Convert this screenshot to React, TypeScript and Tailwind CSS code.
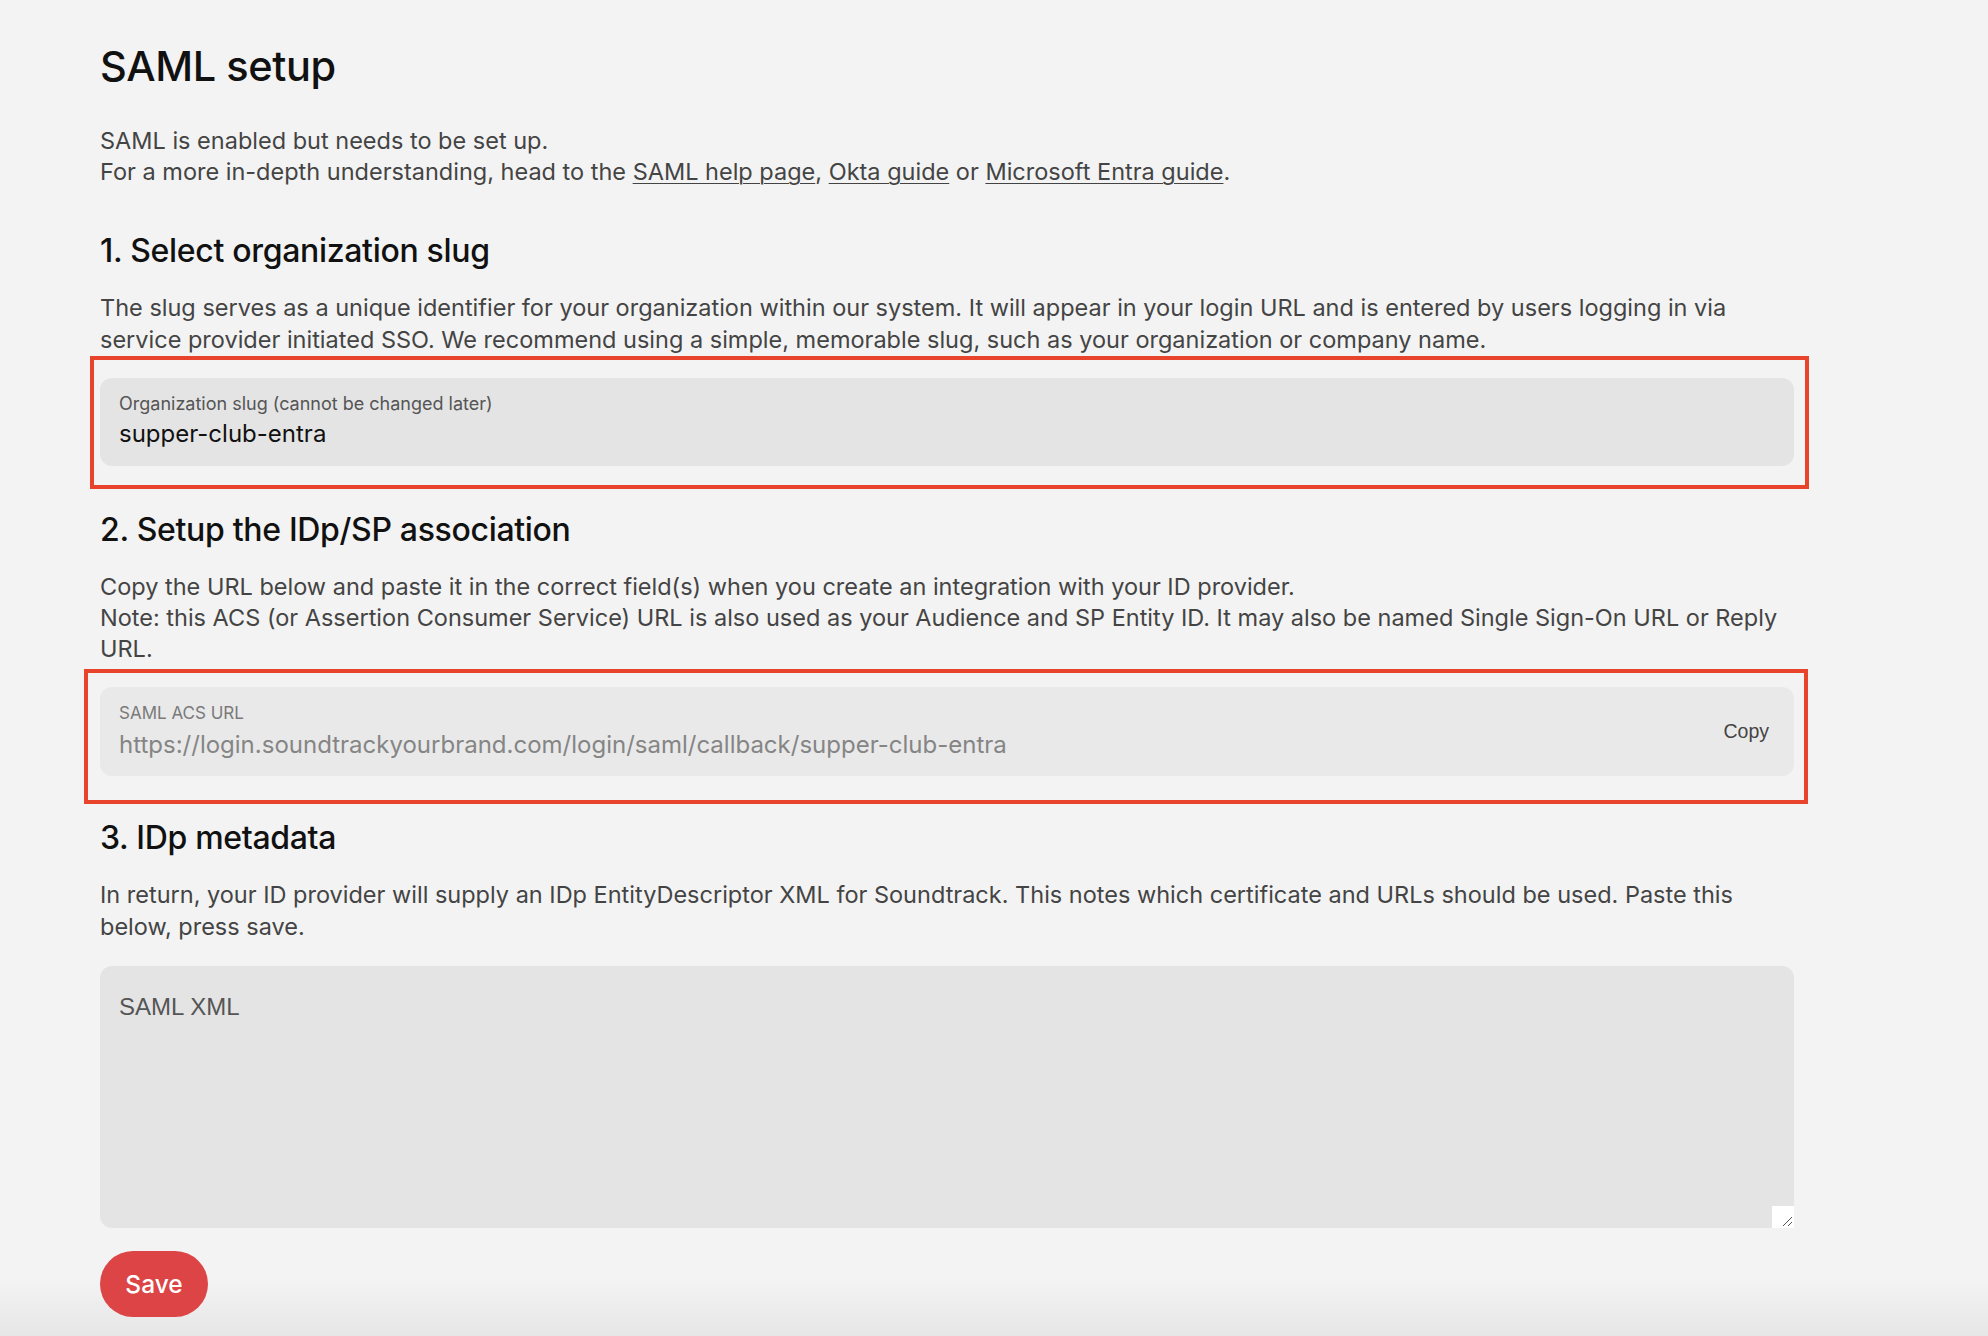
import React from "react";

export default function App() {
  return (
    <div className="h-screen w-full overflow-hidden bg-[linear-gradient(to_bottom,#f3f3f3_calc(100%-56px),#e6e6e6)] font-['Inter',sans-serif]">
      <div className="ml-[100px] w-[1694px] pt-[42px]">
        <h1 className="text-[41.5px] leading-[48px] font-medium text-[#111] tracking-[-0.01em]">SAML setup</h1>

        <p className="mt-[35px] text-[23.5px] leading-[31px] text-[#444] whitespace-nowrap">
          SAML is enabled but needs to be set up.
          <br />
          For a more in-depth understanding, head to the{" "}
          <a className="underline underline-offset-[3px] decoration-1">SAML help page</a>,{" "}
          <a className="underline underline-offset-[3px] decoration-1">Okta guide</a> or{" "}
          <a className="underline underline-offset-[3px] decoration-1">Microsoft Entra guide</a>.
        </p>

        <h2 className="mt-[46px] text-[32px] leading-[36px] font-medium text-[#111] tracking-[-0.01em]">
          1. Select organization slug
        </h2>
        <p className="mt-[23px] text-[23.5px] leading-[32px] text-[#444] whitespace-nowrap">
          The slug serves as a unique identifier for your organization within our system. It will appear in your login URL and is entered by users logging in via
          <br />
          service provider initiated SSO. We recommend using a simple, memorable slug, such as your organization or company name.
        </p>

        <div className="-ml-[10px] w-[1719px] border-[4px] border-[#e8432b] pt-[18px] pb-[19px] pl-[6px] pr-[11px]">
          <div className="h-[88px] rounded-[12px] bg-[#e4e4e4] pl-[19px] pt-[16px] flex flex-col">
            <span className="text-[18px] leading-[20px] text-[#555]">Organization slug (cannot be changed later)</span>
            <span className="mt-[6px] text-[24px] leading-[28px] text-[#111]">supper-club-entra</span>
          </div>
        </div>

        <h2 className="mt-[23px] text-[32px] leading-[36px] font-medium text-[#111] tracking-[-0.01em]">
          2. Setup the IDp/SP association
        </h2>
        <p className="mt-[23px] text-[23.5px] leading-[31px] text-[#444] whitespace-nowrap">
          Copy the URL below and paste it in the correct field(s) when you create an integration with your ID provider.
          <br />
          Note: this ACS (or Assertion Consumer Service) URL is also used as your Audience and SP Entity ID. It may also be named Single Sign-On URL or Reply
          <br />
          URL.
        </p>

        <div className="mt-[5px] -ml-[16px] w-[1724px] border-[4px] border-[#e8432b] pt-[14px] pb-[24px] pl-[12px] pr-[10px]">
          <div className="h-[89px] rounded-[12px] bg-[#e9e9e9] pl-[19px] pr-[25px] flex items-center justify-between">
            <div className="self-start pt-[16px] flex flex-col">
              <span className="text-[17px] leading-[20px] text-[#7a7a7a]">SAML ACS URL</span>
              <span className="mt-[8px] text-[24px] leading-[28px] text-[#858585]">
                https://login.soundtrackyourbrand.com/login/saml/callback/supper-club-entra
              </span>
            </div>
            <button className="font-['Liberation_Sans',sans-serif] text-[19.5px] text-[#444]">Copy</button>
          </div>
        </div>

        <h2 className="mt-[16px] text-[32px] leading-[36px] font-medium text-[#111] tracking-[-0.01em]">
          3. IDp metadata
        </h2>
        <p className="mt-[23px] text-[23.5px] leading-[32px] text-[#444] whitespace-nowrap">
          In return, your ID provider will supply an IDp EntityDescriptor XML for Soundtrack. This notes which certificate and URLs should be used. Paste this
          <br />
          below, press save.
        </p>

        <div className="relative mt-[23px] h-[262px] w-[1694px] rounded-[12px] bg-[#e4e4e4]">
          <textarea
            placeholder="SAML XML"
            className="h-full w-full resize-none bg-transparent pl-[19px] pt-[27px] font-['Liberation_Sans',sans-serif] text-[24px] leading-[28px] text-[#222] outline-none placeholder:text-[#555]"
          />
          <div className="absolute right-0 bottom-0 h-[22px] w-[22px] bg-white">
            <svg width="22" height="22" viewBox="0 0 22 22" className="block">
              <line x1="11" y1="20" x2="20" y2="11" stroke="#555" strokeWidth="1" />
              <line x1="16" y1="20" x2="20" y2="16" stroke="#555" strokeWidth="1" />
            </svg>
          </div>
        </div>

        <button className="mt-[23px] h-[66px] w-[108px] rounded-full bg-[#dc4446] text-[24.5px] font-medium text-white">
          Save
        </button>
      </div>
    </div>
  );
}
